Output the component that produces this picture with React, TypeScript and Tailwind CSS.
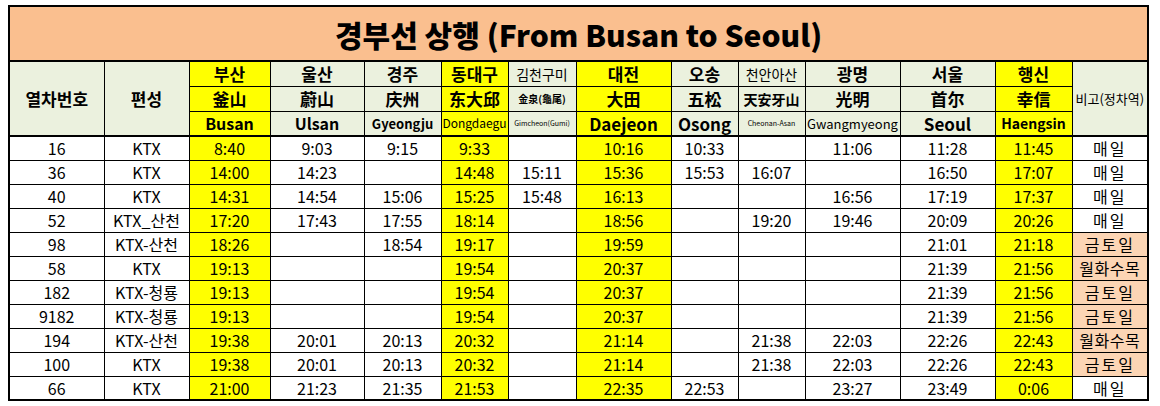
import React from "react";

const widths = [95, 85, 81, 94, 77, 67, 68, 95, 67, 67, 95, 95, 77, 76];
const yellowCols = new Set([2, 5, 7, 12]);

type Row = { cells: string[]; note: string; peach: boolean };

const data: Row[] = [
  { cells: ["16", "KTX", "8:40", "9:03", "9:15", "9:33", "", "10:16", "10:33", "", "11:06", "11:28", "11:45"], note: "매일", peach: false },
  { cells: ["36", "KTX", "14:00", "14:23", "", "14:48", "15:11", "15:36", "15:53", "16:07", "", "16:50", "17:07"], note: "매일", peach: false },
  { cells: ["40", "KTX", "14:31", "14:54", "15:06", "15:25", "15:48", "16:13", "", "", "16:56", "17:19", "17:37"], note: "매일", peach: false },
  { cells: ["52", "KTX_산천", "17:20", "17:43", "17:55", "18:14", "", "18:56", "", "19:20", "19:46", "20:09", "20:26"], note: "매일", peach: false },
  { cells: ["98", "KTX-산천", "18:26", "", "18:54", "19:17", "", "19:59", "", "", "", "21:01", "21:18"], note: "금토일", peach: true },
  { cells: ["58", "KTX", "19:13", "", "", "19:54", "", "20:37", "", "", "", "21:39", "21:56"], note: "월화수목", peach: true },
  { cells: ["182", "KTX-청룡", "19:13", "", "", "19:54", "", "20:37", "", "", "", "21:39", "21:56"], note: "금토일", peach: true },
  { cells: ["9182", "KTX-청룡", "19:13", "", "", "19:54", "", "20:37", "", "", "", "21:39", "21:56"], note: "금토일", peach: true },
  { cells: ["194", "KTX-산천", "19:38", "20:01", "20:13", "20:32", "", "21:14", "", "21:38", "22:03", "22:26", "22:43"], note: "월화수목", peach: true },
  { cells: ["100", "KTX", "19:38", "20:01", "20:13", "20:32", "", "21:14", "", "21:38", "22:03", "22:26", "22:43"], note: "금토일", peach: true },
  { cells: ["66", "KTX", "21:00", "21:23", "21:35", "21:53", "", "22:35", "22:53", "", "23:27", "23:49", "0:06"], note: "매일", peach: false },
];

type H = { t: string; c: string };
const stations: { r1: H; r2: H; r3: H }[] = [
  { r1: { t: "부산", c: "text-[17px] font-bold" }, r2: { t: "釜山", c: "text-[17px] font-bold" }, r3: { t: "Busan", c: "text-[16px] font-bold" } },
  { r1: { t: "울산", c: "text-[17px] font-bold" }, r2: { t: "蔚山", c: "text-[17px] font-bold" }, r3: { t: "Ulsan", c: "text-[16px] font-bold" } },
  { r1: { t: "경주", c: "text-[17px] font-bold" }, r2: { t: "庆州", c: "text-[17px] font-bold" }, r3: { t: "Gyeongju", c: "text-[13px] font-bold" } },
  { r1: { t: "동대구", c: "text-[17px] font-bold" }, r2: { t: "东大邱", c: "text-[17px] font-bold" }, r3: { t: "Dongdaegu", c: "text-[12px]" } },
  { r1: { t: "김천구미", c: "text-[14px]" }, r2: { t: "金泉(龜尾)", c: "text-[10px] font-bold" }, r3: { t: "Gimcheon(Gumi)", c: "text-[7px]" } },
  { r1: { t: "대전", c: "text-[17px] font-bold" }, r2: { t: "大田", c: "text-[17px] font-bold" }, r3: { t: "Daejeon", c: "text-[17px] font-bold" } },
  { r1: { t: "오송", c: "text-[17px] font-bold" }, r2: { t: "五松", c: "text-[17px] font-bold" }, r3: { t: "Osong", c: "text-[17px] font-bold" } },
  { r1: { t: "천안아산", c: "text-[14px]" }, r2: { t: "天安牙山", c: "text-[14px] font-bold" }, r3: { t: "Cheonan-Asan", c: "text-[7px]" } },
  { r1: { t: "광명", c: "text-[17px] font-bold" }, r2: { t: "光明", c: "text-[17px] font-bold" }, r3: { t: "Gwangmyeong", c: "text-[13px]" } },
  { r1: { t: "서울", c: "text-[17px] font-bold" }, r2: { t: "首尔", c: "text-[17px] font-bold" }, r3: { t: "Seoul", c: "text-[17px] font-bold" } },
  { r1: { t: "행신", c: "text-[17px] font-bold" }, r2: { t: "幸信", c: "text-[17px] font-bold" }, r3: { t: "Haengsin", c: "text-[14px] font-bold" } },
];

const base = "border border-black text-center align-middle p-0 leading-none whitespace-nowrap";

export default function App() {
  return (
    <div className="w-[1160px] h-[406px] bg-white pt-[5px] pl-[8px] font-['Noto_Sans_CJK_KR',sans-serif] text-black">
      <table className="table-fixed border-collapse border-2 border-black w-[1141px]">
        <colgroup>
          {widths.map((w, i) => (
            <col key={i} style={{ width: w }} />
          ))}
        </colgroup>
        <tbody>
          <tr className="h-[55px]">
            <td colSpan={14} className={`${base} border-b-2 bg-[#fabf8f] text-[30px] font-black tracking-[0px]`}>
              경부선 상행 (From Busan to Seoul)
            </td>
          </tr>
          <tr className="h-[25px]">
            <td rowSpan={3} className={`${base} border-b-2 bg-[#ebf1de] text-[17px] font-bold`}>열차번호</td>
            <td rowSpan={3} className={`${base} border-b-2 bg-[#ebf1de] text-[17px] font-bold`}>편성</td>
            {stations.map((s, i) => (
              <td key={i} className={`${base} ${yellowCols.has(i + 2) ? "bg-[#ffff00]" : "bg-[#ebf1de]"} ${s.r1.c}`}>{s.r1.t}</td>
            ))}
            <td rowSpan={3} className={`${base} border-b-2 bg-[#ebf1de] text-[13px]`}>비고(정차역)</td>
          </tr>
          <tr className="h-[25px]">
            {stations.map((s, i) => (
              <td key={i} className={`${base} ${yellowCols.has(i + 2) ? "bg-[#ffff00]" : "bg-[#ebf1de]"} ${s.r2.c}`}>{s.r2.t}</td>
            ))}
          </tr>
          <tr className="h-[25px]">
            {stations.map((s, i) => (
              <td key={i} className={`${base} border-b-2 ${yellowCols.has(i + 2) ? "bg-[#ffff00]" : "bg-[#ebf1de]"} ${s.r3.c}`}>{s.r3.t}</td>
            ))}
          </tr>
          {data.map((r, ri) => (
            <tr key={ri} className="h-[24px]">
              {r.cells.map((c, ci) => (
                <td key={ci} className={`${base} text-[16px] ${yellowCols.has(ci) ? "bg-[#ffff00]" : "bg-white"}`}>{c}</td>
              ))}
              <td
                className={`${base} text-[16px] ${r.note.length > 3 ? "tracking-[0.5px]" : "tracking-[2px]"} ${r.peach ? "bg-[#fcd5b4]" : "bg-white"}`}
              >
                {r.note}
              </td>
            </tr>
          ))}
        </tbody>
      </table>
    </div>
  );
}
